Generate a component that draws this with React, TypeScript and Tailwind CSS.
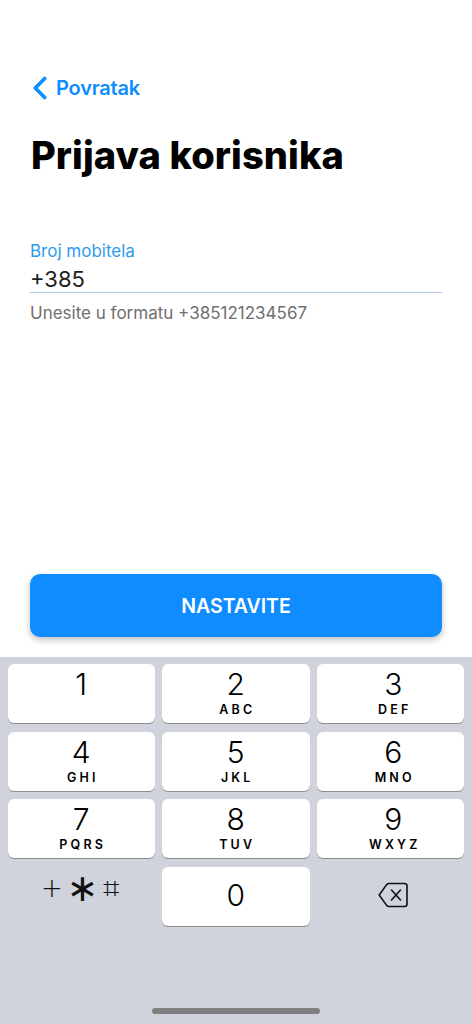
import React from 'react';
import { ChevronLeft } from 'lucide-react';

const keyRows = [
  [
    { digit: '1', letters: '', pad: '' },
    { digit: '2', letters: 'ABC', pad: '' },
    { digit: '3', letters: 'DEF', pad: 'pl-[6px]' },
  ],
  [
    { digit: '4', letters: 'GHI', pad: '' },
    { digit: '5', letters: 'JKL', pad: '' },
    { digit: '6', letters: 'MNO', pad: 'pl-[6px]' },
  ],
  [
    { digit: '7', letters: 'PQRS', pad: '' },
    { digit: '8', letters: 'TUV', pad: '' },
    { digit: '9', letters: 'WXYZ', pad: 'pl-[6px]' },
  ],
];

const Key: React.FC<{ digit: string; letters: string; pad: string }> = ({ digit, letters, pad }) => (
  <div className={`flex h-[59px] flex-col items-center rounded-[6px] bg-white shadow-[0_1px_0_#8c8c8f] ${pad}`}>
    <span className="mt-[2px] h-[36px] text-[30px] leading-[36px] font-light text-black">{digit}</span>
    <span className="mt-[1px] pl-[3px] text-[12.5px] leading-[14px] font-semibold tracking-[3.2px] text-black">{letters}</span>
  </div>
);

const BackspaceIcon = () => (
  <svg width="30" height="26" viewBox="0 0 30 26" fill="none" stroke="#111" strokeWidth="1.6" strokeLinejoin="round" strokeLinecap="round">
    <path d="M11 1.5H26.5C28 1.5 29 2.5 29 4V22C29 23.5 28 24.5 26.5 24.5H11C10 24.5 9.4 24.2 8.8 23.6L1.2 13L8.8 2.4C9.4 1.8 10 1.5 11 1.5Z" />
    <path d="M13.5 8L22.5 18M22.5 8L13.5 18" />
  </svg>
);

export default function App() {
  return (
    <div className="flex h-[1024px] w-[472px] flex-col overflow-hidden bg-white font-['Inter',sans-serif]">
      <div className="flex flex-1 flex-col px-[30px]">
        <div className="mt-[73px] flex h-[29px] items-center text-[#0f8cff]">
          <ChevronLeft size={38} strokeWidth={2.3} className="-ml-[9px] -mr-[3px] shrink-0" />
          <span className="text-[20px] leading-[28px] font-semibold tracking-[-0.2px]">Povratak</span>
        </div>

        <h1 className="mt-[31px] pl-[1px] text-[38px] leading-[44px] font-extrabold tracking-[0.1px] text-black">Prijava korisnika</h1>

        <label className="mt-[62px] text-[17px] leading-[24px] text-[#2f9bee]">Broj mobitela</label>
        <div className="h-[30px] border-b border-[#b4cbe6] text-[22px] leading-[32px] text-[#222]">+385</div>
        <p className="mt-[8px] text-[17px] leading-[24px] text-[#6f6f6f]">Unesite u formatu +385121234567</p>

        <div className="flex-1" />

        <button className="mb-[20.5px] flex h-[63px] w-full items-center justify-center rounded-[10px] bg-[#0f8cff] pt-[3px] text-[19.5px] font-semibold text-white shadow-[0_3px_6px_rgba(0,0,0,0.25)]">
          NASTAVITE
        </button>
      </div>

      <div className="flex h-[367px] flex-col bg-[#d0d3db] pt-[7px] pr-[8px] pl-[7.5px]">
        <div className="grid grid-cols-3 gap-x-[7px] gap-y-[8.5px]">
          {keyRows.flat().map(k => (
            <Key key={k.digit} digit={k.digit} letters={k.letters} pad={k.pad} />
          ))}
          <div className="flex h-[59px] items-start justify-center gap-[4px] pt-[3px] pr-[3px] font-['DejaVu_Sans',sans-serif] text-[#111]">
            <span className="text-[26px] leading-[36px] font-extralight">+</span>
            <span className="text-[38px] leading-[36px]">∗</span>
            <span className="text-[29px] leading-[36px]">⌗</span>
          </div>
          <div className="flex h-[59px] items-center justify-center rounded-[6px] bg-white pb-[2px] text-[30px] font-light text-black shadow-[0_1px_0_#8c8c8f]">0</div>
          <div className="flex h-[59px] items-start justify-center pt-[15px] pl-[5px]">
            <BackspaceIcon />
          </div>
        </div>
        <div className="flex-1" />
        <div className="mb-[10.5px] h-[6px] w-[168px] self-center rounded-full bg-[#808080]" />
      </div>
    </div>
  );
}
